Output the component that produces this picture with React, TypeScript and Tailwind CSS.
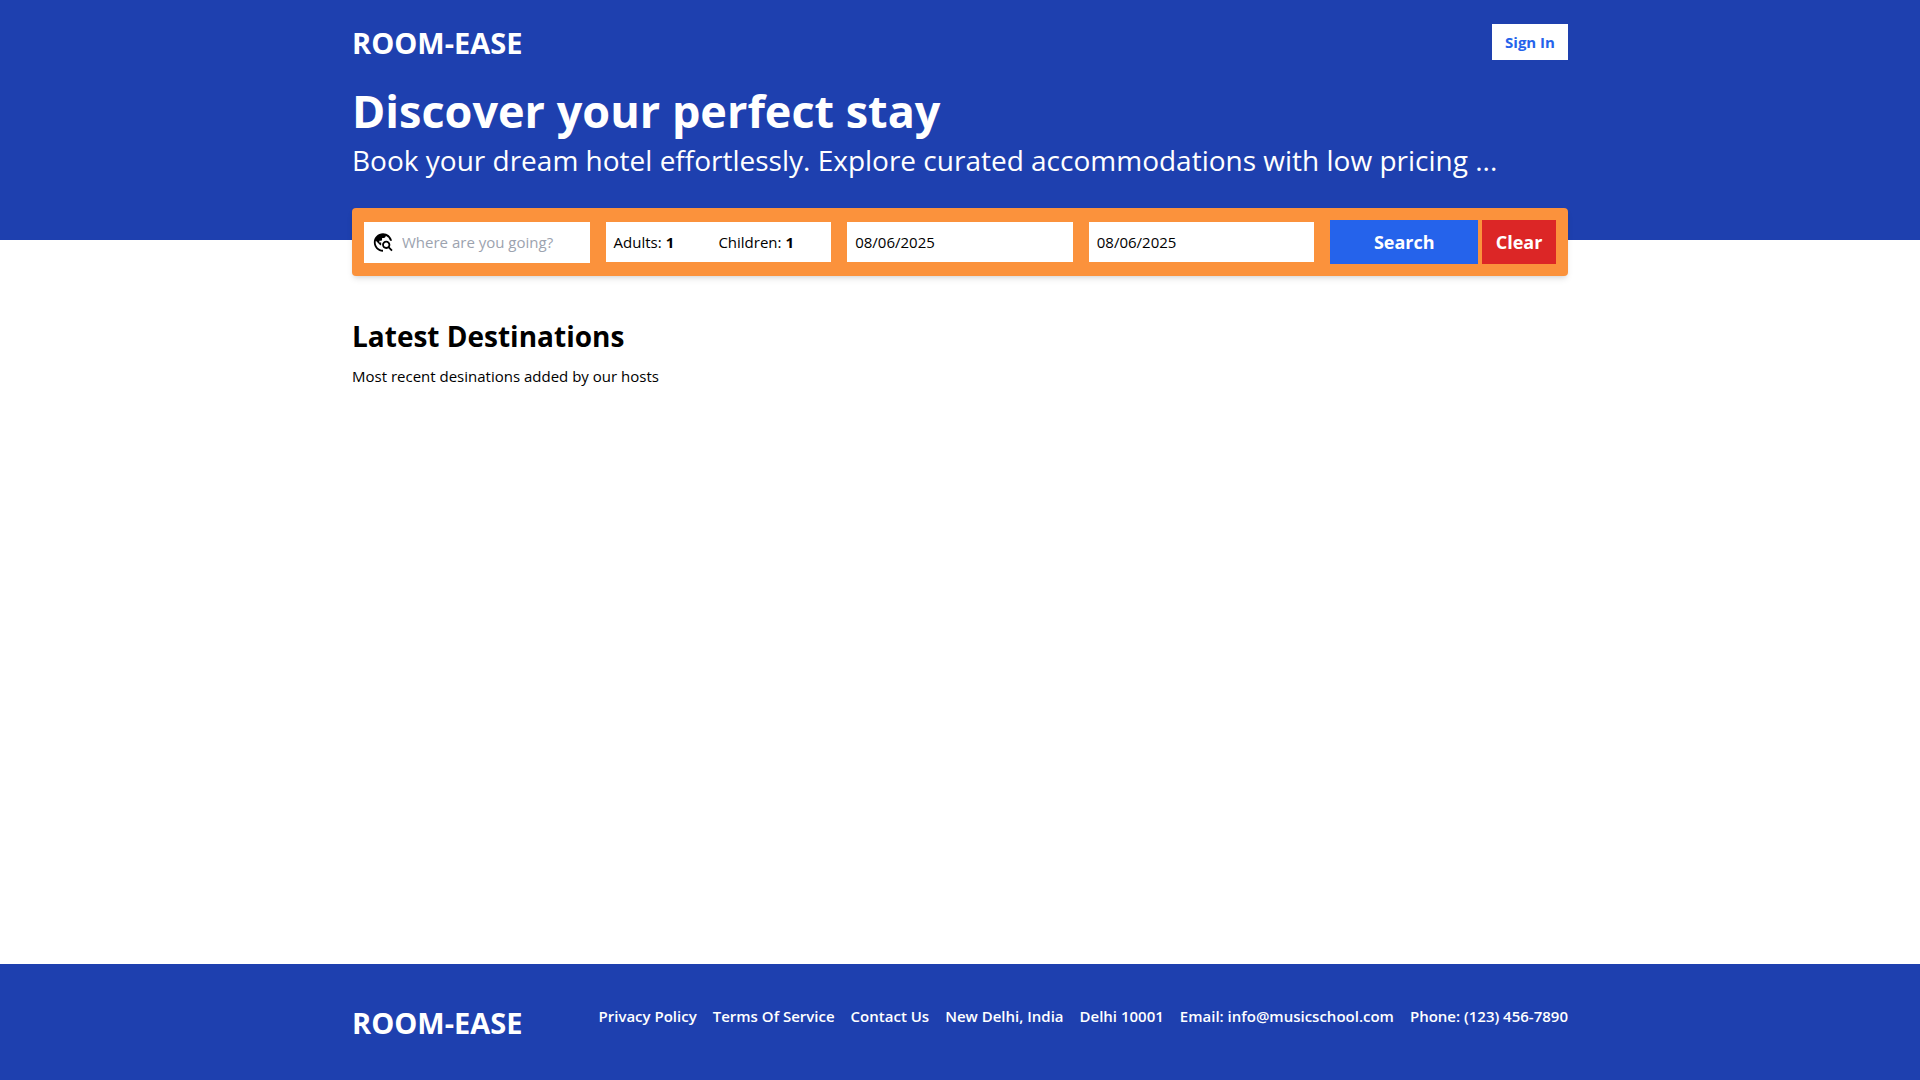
import { useState, type FormEvent, type JSX } from 'react'
import { MdTravelExplore } from 'react-icons/md'

const TODAY = '08/06/2025'

const FOOTER_LINKS = [
  { label: 'Privacy Policy', href: '#privacy' },
  { label: 'Terms Of Service', href: '#terms' },
  { label: 'Contact Us', href: '#contact' },
  { label: 'New Delhi, India', href: '#city' },
  { label: 'Delhi 10001', href: '#address' },
  { label: 'Email: info@musicschool.com', href: 'mailto:info@musicschool.com' },
  { label: 'Phone: (123) 456-7890', href: 'tel:1234567890' },
]

export default function App(): JSX.Element {
  return (
    <div className="flex min-h-screen flex-col bg-white font-['Open_Sans','Noto_Sans',sans-serif] text-[15px] leading-6 text-black">
      <div className="bg-[#1e40af] text-white">
        <Header />
        <Hero />
      </div>
      <div className="mx-auto w-full max-w-7xl px-8">
        <SearchBar />
      </div>
      <main className="mx-auto w-full max-w-7xl flex-1 px-8 py-10">
        <section className="space-y-2">
          <h2 className="text-[28px] font-bold leading-10">Latest Destinations</h2>
          <p>Most recent desinations added by our hosts</p>
        </section>
      </main>
      <Footer />
    </div>
  )
}

function Logo(): JSX.Element {
  return (
    <a href="#home" className="text-[29px] font-bold leading-[38px]">
      ROOM-EASE
    </a>
  )
}

function Header(): JSX.Element {
  return (
    <header className="mx-auto flex max-w-7xl items-start justify-between px-8 pt-6">
      <Logo />
      <a
        href="#sign-in"
        className="flex h-9 w-[76px] items-center justify-center bg-white font-bold text-[#2563eb] hover:bg-gray-100"
      >
        Sign In
      </a>
    </header>
  )
}

function Hero(): JSX.Element {
  return (
    <div className="mx-auto flex max-w-7xl flex-col gap-1 px-8 pb-15 pt-6">
      <h1 className="text-[45px] font-bold leading-[50px]">Discover your perfect stay</h1>
      <p className="text-[28px] leading-10">
        Book your dream hotel effortlessly. Explore curated accommodations with low pricing ...
      </p>
    </div>
  )
}

function SearchBar(): JSX.Element {
  const [destination, setDestination] = useState('')
  const [adults, setAdults] = useState('1')
  const [children, setChildren] = useState('1')
  const [checkIn, setCheckIn] = useState(TODAY)
  const [checkOut, setCheckOut] = useState(TODAY)

  function handleSubmit(e: FormEvent<HTMLFormElement>): void {
    e.preventDefault()
  }

  function handleClear(): void {
    setDestination('')
    setAdults('1')
    setChildren('1')
    setCheckIn(TODAY)
    setCheckOut(TODAY)
  }

  return (
    <form
      onSubmit={handleSubmit}
      className="relative -mt-8 grid grid-cols-2 items-center gap-4 rounded bg-[#fb923c] p-3 shadow-md lg:grid-cols-5"
    >
      <label className="flex items-center gap-2 bg-white p-2">
        <MdTravelExplore className="h-[25px] w-[22px] shrink-0" />
        <input
          aria-label="Destination"
          placeholder="Where are you going?"
          value={destination}
          onChange={(e) => setDestination(e.target.value)}
          className="w-full min-w-0 placeholder:text-[#9ca3af] focus:outline-none"
        />
      </label>

      <div className="grid h-10 grid-cols-2 items-center bg-white px-2">
        <GuestField label="Adults:" min={1} value={adults} onChange={setAdults} />
        <GuestField label="Children:" min={0} value={children} onChange={setChildren} />
      </div>

      <DateField label="Check-in date" value={checkIn} onChange={setCheckIn} />
      <DateField label="Check-out date" value={checkOut} onChange={setCheckOut} />

      <div className="flex gap-1">
        <button
          type="submit"
          className="h-11 w-2/3 bg-[#2563eb] text-lg font-bold text-white hover:bg-blue-500"
        >
          Search
        </button>
        <button
          type="button"
          onClick={handleClear}
          className="h-11 w-1/3 bg-[#dc2626] text-lg font-bold text-white hover:bg-red-500"
        >
          Clear
        </button>
      </div>
    </form>
  )
}

interface FieldProps {
  label: string
  value: string
  onChange: (value: string) => void
}

function GuestField({ label, min, value, onChange }: FieldProps & { min: number }): JSX.Element {
  return (
    <label className="flex items-center">
      {label}
      <input
        type="number"
        min={min}
        max={20}
        value={value}
        onChange={(e) => onChange(e.target.value)}
        className="w-full min-w-0 px-1 font-bold focus:outline-none"
      />
    </label>
  )
}

function DateField({ label, value, onChange }: FieldProps): JSX.Element {
  return (
    <input
      aria-label={label}
      value={value}
      onChange={(e) => onChange(e.target.value)}
      className="h-10 w-full min-w-0 bg-white px-2 focus:outline-none"
    />
  )
}

function Footer(): JSX.Element {
  return (
    <footer className="bg-[#1e40af] pb-[38px] pt-10 text-white">
      <div className="mx-auto flex max-w-7xl items-start justify-between px-8">
        <Logo />
        <nav className="flex gap-4 font-semibold">
          {FOOTER_LINKS.map((link) => (
            <a key={link.label} href={link.href}>
              {link.label}
            </a>
          ))}
        </nav>
      </div>
    </footer>
  )
}
